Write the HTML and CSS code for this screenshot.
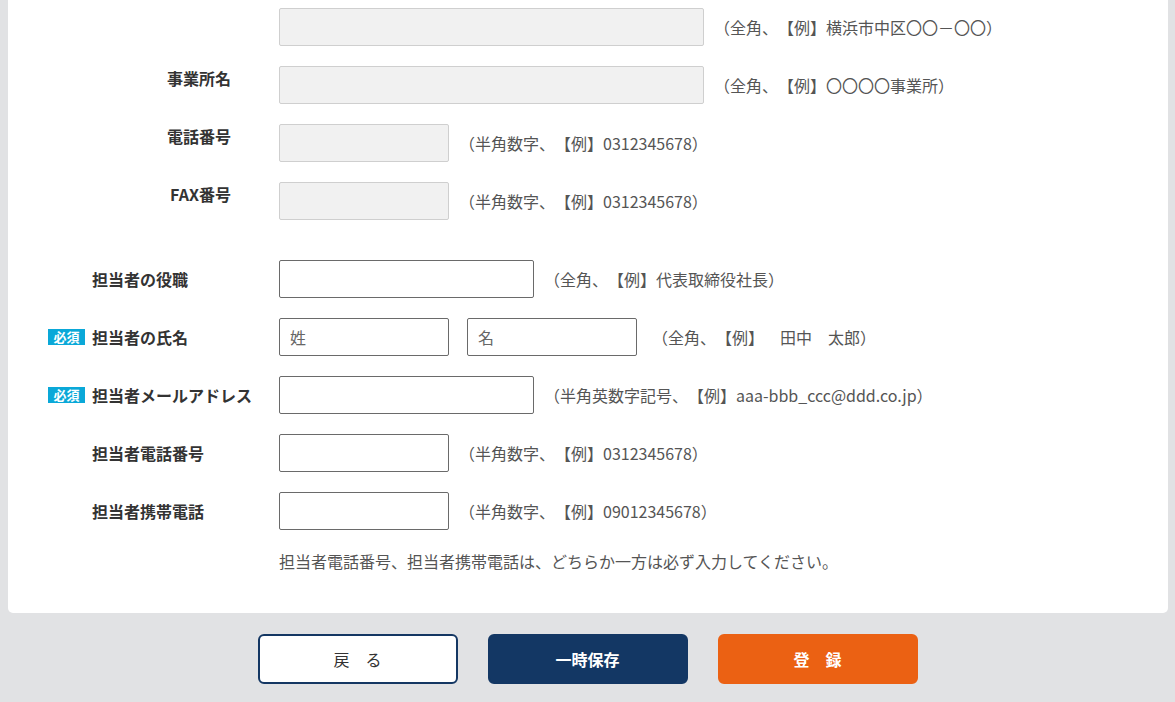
FILE: index.html
```html
<!DOCTYPE html>
<html lang="ja">
<head>
<meta charset="utf-8">
<title>担当者情報</title>
<link rel="stylesheet" href="styles.css">
</head>
<body>
<div class="page">
  <div class="card">
    <div class="row">
      <div class="label label-top"></div>
      <div class="field">
        <input class="input input-lg" type="text" disabled>
        <span class="hint">（全角、【例】横浜市中区〇〇－〇〇）</span>
      </div>
    </div>
    <div class="row">
      <div class="label label-top">事業所名</div>
      <div class="field">
        <input class="input input-lg" type="text" disabled>
        <span class="hint">（全角、【例】〇〇〇〇事業所）</span>
      </div>
    </div>
    <div class="row">
      <div class="label label-top">電話番号</div>
      <div class="field">
        <input class="input input-sm" type="text" disabled>
        <span class="hint">（半角数字、【例】0312345678）</span>
      </div>
    </div>
    <div class="row">
      <div class="label label-top">FAX番号</div>
      <div class="field">
        <input class="input input-sm" type="text" disabled>
        <span class="hint">（半角数字、【例】0312345678）</span>
      </div>
    </div>

    <div class="row row-sep">
      <div class="label label-left"><span class="badge badge-empty"></span>担当者の役職</div>
      <div class="field">
        <input class="input input-md" type="text">
        <span class="hint">（全角、【例】代表取締役社長）</span>
      </div>
    </div>
    <div class="row">
      <div class="label label-left"><span class="badge">必須</span>担当者の氏名</div>
      <div class="field">
        <input class="input input-sm" type="text" placeholder="姓">
        <input class="input input-sm" type="text" placeholder="名">
        <span class="hint hint-wide">（全角、【例】　田中　太郎）</span>
      </div>
    </div>
    <div class="row">
      <div class="label label-left"><span class="badge">必須</span>担当者メールアドレス</div>
      <div class="field">
        <input class="input input-md" type="text">
        <span class="hint">（半角英数字記号、【例】aaa-bbb_ccc@ddd.co.jp）</span>
      </div>
    </div>
    <div class="row">
      <div class="label label-left"><span class="badge badge-empty"></span>担当者電話番号</div>
      <div class="field">
        <input class="input input-sm" type="text">
        <span class="hint">（半角数字、【例】0312345678）</span>
      </div>
    </div>
    <div class="row">
      <div class="label label-left"><span class="badge badge-empty"></span>担当者携帯電話</div>
      <div class="field">
        <input class="input input-sm" type="text">
        <span class="hint">（半角数字、【例】09012345678）</span>
      </div>
    </div>
    <p class="note">担当者電話番号、担当者携帯電話は、どちらか一方は必ず入力してください。</p>
  </div>

  <div class="actions">
    <button class="btn btn-back" type="button">戻　る</button>
    <button class="btn btn-save" type="button">一時保存</button>
    <button class="btn btn-submit" type="button">登　録</button>
  </div>
</div>
</body>
</html>
```

FILE: styles.css
```css
* { box-sizing: border-box; }
html, body {
  margin: 0;
  padding: 0;
  background: #e1e2e4;
  font-family: "Noto Sans CJK JP", "Noto Sans", sans-serif;
  color: #333;
  text-spacing-trim: space-all;
}
.page {
  width: 1175px;
  height: 702px;
  overflow: hidden;
}
.card {
  margin: 0 7px 0 8px;
  background: #fff;
  border-radius: 0 0 5px 5px;
  padding: 8px 0 41px;
  display: flex;
  flex-direction: column;
  gap: 20px;
}
.row {
  display: grid;
  grid-template-columns: 271px 1fr;
  height: 38px;
}
.row-sep { margin-top: 20px; }
.label {
  font-size: 16px;
  font-weight: 700;
  color: #333;
  line-height: 24px;
  white-space: nowrap;
}
.label-top {
  text-align: right;
  padding-right: 48px;
  align-self: start;
}
.label-left {
  display: flex;
  align-items: center;
  padding-left: 40px;
}
.badge {
  display: inline-block;
  width: 37px;
  height: 16px;
  margin-right: 7px;
  background: #0aa8d8;
  color: #fff;
  font-size: 13px;
  font-weight: 700;
  line-height: 16px;
  text-align: center;
}
.badge-empty { background: transparent; }
.field {
  display: flex;
  align-items: center;
  gap: 18px;
}
.input {
  height: 38px;
  border: 1px solid #6a6a6a;
  border-radius: 2px;
  background: #fff;
  font-family: inherit;
  font-size: 16px;
  color: #333;
  padding: 0 10px;
  margin: 0;
  outline: none;
}
.input::placeholder { color: #666; }
.input:disabled {
  background: #f1f1f1;
  border-color: #cfcfcf;
}
.input-lg { width: 425px; }
.input-md { width: 255px; }
.input-sm { width: 170px; }
.hint {
  font-size: 16px;
  color: #555;
  white-space: nowrap;
  line-height: 20px;
  margin-left: -8px;
}
.hint-wide { margin-left: -3px; }
.note {
  margin: 0 0 0 271px;
  font-size: 16px;
  color: #555;
  line-height: 22px;
}
.actions {
  display: flex;
  justify-content: center;
  gap: 30px;
  margin-top: 21px;
}
.btn {
  width: 200px;
  height: 50px;
  border-radius: 6px;
  font-family: inherit;
  font-size: 16px;
  font-weight: 700;
  color: #fff;
  border: 2px solid transparent;
  cursor: pointer;
}
.btn-back {
  background: #fff;
  border-color: #143763;
  color: #333;
  font-weight: 400;
}
.btn-save { background: #133764; border-color: #133764; }
.btn-submit { background: #eb6113; border-color: #eb6113; }
```
